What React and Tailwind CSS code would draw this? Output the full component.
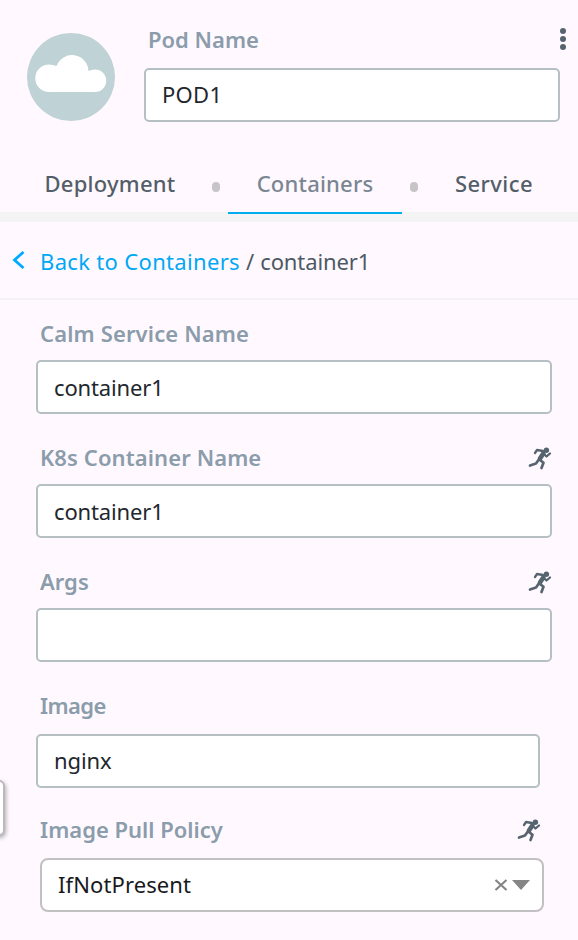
const fieldBox =
  "flex h-[54px] items-center rounded-[5px] border-2 border-[#b6bfc3] bg-white px-4 text-[22px] leading-none text-[#22272e]";

function Runner() {
  return (
    <svg width="24" height="24" viewBox="0 0 24 24" fill="none" stroke="#56646f" strokeLinecap="round" strokeLinejoin="round">
      <circle cx="18.4" cy="4.2" r="2.7" fill="#56646f" stroke="none" />
      <path d="m15.300 7.500-3.300 5" strokeWidth="4.600" />
      <path d="M15 5 9 4 7 7M16.500 8.500l2 2 3.500-3" strokeWidth="2.300" />
      <path d="M11.200 13 8 17.500 2 19.500M12 14l3.500 2.800-2 5.200" strokeWidth="2.700" />
    </svg>
  );
}

function Label({ children, track = "", runner }) {
  return (
    <div className="flex h-[24px] items-center justify-between pl-[4px] text-[22px] font-semibold leading-none text-[#8b9cab]">
      <span className={"-mt-[2px] " + track}>{children}</span>
      {runner && <Runner />}
    </div>
  );
}

function Tab({ children, className }) {
  return <div className={"flex h-[56px] justify-center pt-[14px] leading-none whitespace-nowrap " + className}>{children}</div>;
}

export default function App() {
  return (
    <main className="relative h-[940px] w-[578px] overflow-hidden bg-[#fff9ff] font-['Noto_Sans',sans-serif]">
      <header className="flex h-[158px] pl-[27px]">
        <svg className="mt-[33px] shrink-0" width="88" height="88" viewBox="0 0 88 88">
          <circle cx="44" cy="44" r="44" fill="#bfd2d6" />
          <path d="M22 59A13.500 13.500 0 0 1 22 31.500Q26 31.500 29.500 33A16.500 16.500 0 0 1 61.500 38Q64.500 36.500 68 36.500A11.250 11.250 0 0 1 68 59Z" fill="#fff" />
        </svg>
        <div className="ml-[29px] w-[416px] shrink-0 pt-[28px]">
          <Label>Pod Name</Label>
          <div className={fieldBox + " mt-[16px]"}><span className="-mt-[3px] tracking-[0.3px]">POD1</span></div>
        </div>
        <div className="mt-[28px] flex h-[22px] shrink-0 flex-col justify-between">
          <i className="size-[6px] rounded-full bg-[#56646f]" />
          <i className="size-[6px] rounded-full bg-[#56646f]" />
          <i className="size-[6px] rounded-full bg-[#56646f]" />
        </div>
      </header>
      <nav className="flex h-[64px] border-b-[8px] border-[#f4f4f4] bg-[linear-gradient(to_bottom,transparent_54px,#f4f4f4_54px)] text-[22px] font-medium text-[#535e68]">
        <Tab className="ml-[44px] w-[132px]"><span className="tracking-[0.25px]">Deployment</span></Tab>
        <i className="mt-[24px] ml-[36px] h-[10px] w-[8px] rounded-full bg-[#c6c4c6]" />
        <Tab className="ml-[8px] w-[174px] border-b-2 border-[#00aeef] text-[#7a8691]"><span className="tracking-[0.2px]">Containers</span></Tab>
        <i className="mt-[24px] ml-[8px] h-[10px] w-[8px] rounded-full bg-[#c6c4c6]" />
        <Tab className="ml-[36px] w-[80px]"><span className="tracking-[0.45px]">Service</span></Tab>
      </nav>
      <div className="flex h-[78px] items-center border-b-2 border-[#f4f1f5] pl-[12px] text-[22px] leading-none text-[#4d5965]">
        <svg width="13" height="18" viewBox="0 0 13 18" fill="none" stroke="#00aaff" strokeWidth="2.800"><path d="m11.500 1-9 8 9 8" /></svg>
        <span className="mt-[2px] ml-[15px] tracking-[0.33px] text-[#00a8f5]">Back to Containers</span>
        <span className="mt-[2px] ml-[6px]">/</span>
        <span className="mt-[2px] ml-[6px] tracking-[-0.1px]">container1</span>
      </div>
      <form className="flex flex-col pl-[36px]">
        <div className="mt-[22px] w-[516px]">
          <Label track="tracking-[0.14px]">Calm Service Name</Label>
          <div className={fieldBox + " mt-[14px]"}><span className="tracking-[-0.15px]">container1</span></div>
        </div>
        <div className="mt-[32px] w-[516px]">
          <Label track="tracking-[0.1px]" runner>K8s Container Name</Label>
          <div className={fieldBox + " mt-[14px]"}><span className="tracking-[-0.15px]">container1</span></div>
        </div>
        <div className="mt-[32px] w-[516px]">
          <Label runner>Args</Label>
          <div className={fieldBox + " mt-[14px]"} />
        </div>
        <div className="mt-[32px] w-[504px]">
          <Label track="tracking-[-0.6px]">Image</Label>
          <div className={fieldBox + " mt-[16px]"}><span className="-mt-[3px] tracking-[-0.1px]">nginx</span></div>
        </div>
        <div className="mt-[30px] w-[508px]">
          <div className="w-[505px]"><Label runner>Image Pull Policy</Label></div>
          <div className="mt-[16px] ml-[4px] flex h-[54px] items-center rounded-[8px] border-2 border-[#c2c0c2] bg-white pr-[12px] pl-4 text-[22px] leading-none text-[#18191c]">
            <span className="-mt-[3px] tracking-[0.1px]">IfNotPresent</span>
            <svg className="ml-auto" width="14" height="14" viewBox="0 0 14 14" stroke="#858585" strokeWidth="2.200"><path d="m1.500 2 11 10M12.500 2l-11 10" /></svg>
            <svg className="ml-[4px]" width="18" height="10" viewBox="0 0 18 10" fill="#858585"><path d="M0 0h18L9 10Z" /></svg>
          </div>
        </div>
      </form>
      <div className="absolute top-[780px] -left-[20px] h-[56px] w-[25px] rounded-[6px] border-2 border-[#bbb9bb] bg-white shadow-[1px_2px_4px_#b0adb0]" />
    </main>
  );
}
